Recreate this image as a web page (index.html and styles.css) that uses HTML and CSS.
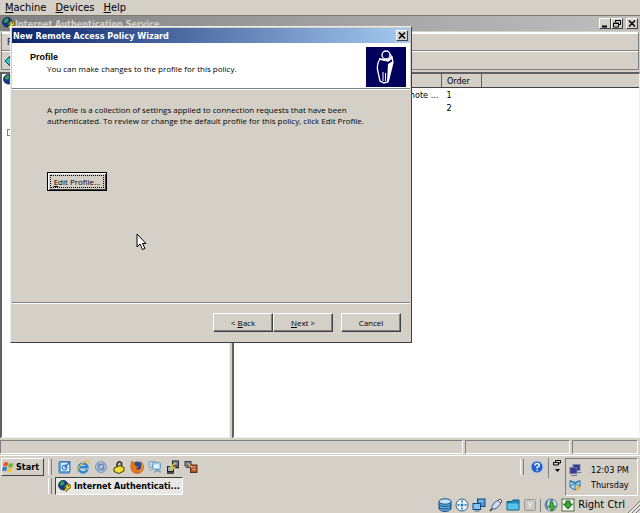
FILE: index.html
```
<!DOCTYPE html>
<html lang="en">
<head>
    <meta charset="UTF-8">
    <meta name="viewport" content="width=device-width, initial-scale=1.0">
    <title>Internet Authentication Service</title>
    <link rel="stylesheet" href="styles.css">
</head>
<body>
    <!-- Shared icons -->
    <svg class="symbols" aria-hidden="true">
        <symbol id="globe-key" viewBox="0 0 16 16">
            <circle cx="6.5" cy="6.5" r="5.8" fill="#123a8c" stroke="#0a1c48"/>
            <path d="M3 3l3-2 2 2-1 3-3 1-2-1zM8 7l3-2 1 2-2 4-2-1z" fill="#2f9e57"/>
            <path d="M8.5 13.5L12 9" stroke="#4a4200" stroke-width="4"/>
            <circle cx="12.5" cy="8" r="3" fill="#f0dc3c" stroke="#4a4200"/>
            <path d="M8.5 13.5L12 9" stroke="#f0dc3c" stroke-width="2"/>
            <circle cx="13" cy="7.500" r="1" fill="#4a4200"/>
        </symbol>
    </svg>

    <nav class="vm-menu">
        <a href="#"><u>M</u>achine</a>
        <a href="#"><u>D</u>evices</a>
        <a href="#"><u>H</u>elp</a>
    </nav>

    <header class="console-title">
        <svg class="icon"><use href="#globe-key"/></svg>
        <span class="title-text">Internet Authentication Service</span>
        <div class="window-buttons">
            <button class="caption" aria-label="Minimize"><svg viewBox="0 0 10 9"><path d="M2 7.500h5" stroke="#000" stroke-width="2"/></svg></button>
            <button class="caption" aria-label="Restore"><svg viewBox="0 0 10 9"><path d="M3.500 3V1.500h5v4H7M3.500 1.500h5M1.500 4h5v4h-5zM1.500 4.500h5" fill="none" stroke="#000"/></svg></button>
            <button class="caption close" aria-label="Close"><svg viewBox="0 0 10 9"><path d="M2 1.500l6 6M8 1.500l-6 6" stroke="#000" stroke-width="1.500"/></svg></button>
        </div>
    </header>

    <div class="bars">
        <div class="bar menu-bar"><a href="#">F</a></div>
        <div class="bar tool-bar">
            <button class="tool" aria-label="Back"><svg viewBox="0 0 12 12"><path d="M1 6l5-5v3h5v4H6v3z" fill="#2cc4c4" stroke="#0b4c58"/></svg></button>
        </div>
    </div>

    <main class="panes">
        <section class="tree-pane">
            <svg class="icon"><use href="#globe-key"/></svg>
            <span class="expander"></span>
        </section>
        <section class="list-pane">
            <table>
                <thead>
                    <tr><th class="name"></th><th class="order">Order</th><th></th></tr>
                </thead>
                <tbody>
                    <tr><td class="name">Remote ...</td><td>1</td><td></td></tr>
                    <tr><td class="name"></td><td>2</td><td></td></tr>
                </tbody>
            </table>
        </section>
    </main>

    <div class="status-bar">
        <span class="wide"></span>
        <span class="mid"></span>
        <span class="small"></span>
    </div>

    <footer class="taskbar">
        <div class="start-area">
            <button class="start">
                <svg viewBox="0 0 13 12">
                    <path d="M2 1.500q2-1.200 4.200 0L5.300 5.500q-2-1-4.200 0z" fill="#e8562a"/>
                    <path d="M7 2q2 1 4.500 0l-1 4q-2.200 1-4.400 0z" fill="#6cb33c"/>
                    <path d="M.9 6.300q2-1 4.200 0l-.9 4q-2-1-4.200 0z" fill="#3c78d8"/>
                    <path d="M5.900 6.800q2 1 4.400 0l-1 4q-2.200 1-4.300 0z" fill="#f4c430"/>
                </svg>
                Start
            </button>
        </div>
        <div class="bands">
            <div class="band quick-launch">
                <button aria-label="Show desktop"><svg viewBox="0 0 14 14"><rect x="1" y="1.500" width="11" height="11.500" rx="1" fill="#5ea2da" stroke="#3f7cb8"/><path d="M3 3h8v8H3z" fill="#e4f2fc"/><circle cx="6.500" cy="7.500" r="2.300" fill="none" stroke="#3a80c0" stroke-width="1.300"/><path d="M6.500 7.500l6-6" stroke="#2d70b4" stroke-width="1.500"/></svg></button>
                <button aria-label="Internet Explorer"><svg viewBox="0 0 14 14"><path d="M11.300 9.500A4.500 4.500 0 1 1 11.500 7.200H4" fill="none" stroke="#2688d8" stroke-width="2.400"/><path d="M2 12.500C-1 10 8-.5 12.500 1c1 .5.500 2 0 2.500" fill="none" stroke="#e8b838" stroke-width="1.200"/></svg></button>
                <button aria-label="Media"><svg viewBox="0 0 14 14"><circle cx="7" cy="7" r="5.500" fill="#9ab2d0" stroke="#8298b8"/><circle cx="7" cy="7" r="3" fill="#86a4cc" stroke="#6684ac"/><path d="M5.500 8.500l3-3" stroke="#e8f0f8"/><path d="M7 2v1.500M7 10.500V12M2 7h1.500M10.500 7H12" stroke="#d8e4f0"/></svg></button>
                <button aria-label="Lock"><svg viewBox="0 0 14 14"><path d="M5 7V4q2-4 4.500-1v4" fill="none" stroke="#222" stroke-width="1.500"/><path d="M2 8l6-2.500 4 2v3.500l-5 2.500L2 11.500z" fill="#ecd820" stroke="#4a4200"/><path d="M4 9l3 1.200v2" stroke="#fff59a" fill="none"/></svg></button>
                <button aria-label="Firefox"><svg viewBox="0 0 14 14"><circle cx="7.200" cy="6.500" r="5" fill="#284f94"/><path d="M1 4q0-2 1-3 1 2 3 2-1 2 1 3l2 .5Q5 9 8 10q3 0 3.500-3.500Q12 3 10.500 1.500 14 4 13.500 8 12.500 13 7 13.500 1.500 13 .8 7.500z" fill="#e8761c" stroke="#ad4815" stroke-width=".6"/><path d="M12 4.500q1 5-3 7" fill="none" stroke="#f9bd3b"/></svg></button>
                <button aria-label="Remote desktop"><svg viewBox="0 0 14 14"><rect x="1" y="1.500" width="6" height="6" fill="#b9d4ec" stroke="#8aa4bc"/><rect x="4.500" y="2.500" width="8" height="7" rx="1" fill="#a4d0f4" stroke="#6d9fc3"/><path d="M6 4.500h5v3.500H6z" fill="#e6f4fe"/><path d="M6 12.500l3-2 4 1.500" fill="none" stroke="#8296ac" stroke-width="1.500"/><path d="M1 10h3" stroke="#9aacbc"/></svg></button>
                <button aria-label="Terminal"><svg viewBox="0 0 14 14"><rect x="6.500" y="1" width="6" height="5" fill="#7484b4" stroke="#222"/><path d="M7 7.500h6M1 13h7" stroke="#222" stroke-width="1.300"/><rect x="1.500" y="6.500" width="6" height="5" fill="#a7b3cc" stroke="#222"/><path d="M9.500 3L5 6.500l3.500 1-4 3" fill="none" stroke="#e7ce25" stroke-width="1.300"/></svg></button>
                <button aria-label="Transfer"><svg viewBox="0 0 14 14"><rect x="1" y="1.500" width="6" height="4.500" fill="#7888a8" stroke="#3a3a45"/><path d="M2 7.500h4" stroke="#555" stroke-width="1.300"/><rect x="6.500" y="5" width="6.500" height="7.500" fill="#b0532f" stroke="#602e1e"/><path d="M8 7h4M8 9.500h4" stroke="#e4a274"/><path d="M4 3.500l4 4" stroke="#dfbd4b" stroke-width="1.300"/></svg></button>
            </div>
            <div class="band tasks">
                <button class="task"><svg class="icon"><use href="#globe-key"/></svg>Internet Authenticati...</button>
            </div>
        </div>
        <div class="language">
            <button aria-label="Help"><svg viewBox="0 0 14 14"><circle cx="7" cy="7" r="6" fill="#2563c8" stroke="#a9c5ef"/><path d="M5 5.500q0-2 2.200-2T9.300 5.300Q9.300 6.500 7.200 7.300V8.500M7.200 9.700v1.400" fill="none" stroke="#fff" stroke-width="1.500"/></svg></button>
        </div>
        <button class="chevrons" aria-label="Restore language bar"><svg viewBox="0 0 8 14"><path d="M2.500 3V1.500h5v2.500H6M.5 3.500h5v2.500h-5z" fill="none" stroke="#000"/><path d="M2 10h5l-2.500 3z"/></svg></button>
        <div class="tray">
            <div class="tray-row">
                <svg viewBox="0 0 12 12"><rect x="4" y=".5" width="7" height="6" fill="#2c368b" stroke="#7c85ad"/><rect x="1" y="3.500" width="7" height="6" fill="#353da1" stroke="#6c7396"/><path d="M2 11.500h6M9 8.500h3" stroke="#6c7080"/></svg>
                <span>12:03 PM</span>
            </div>
            <div class="tray-row">
                <svg viewBox="0 0 12 12"><path d="M1 1.500l5 2 5-2v6L6 11 1 8z" fill="#b6d8ec" stroke="#286ea4"/><path d="M1 2l10 5M11 2L1 7M6 3.500v7" stroke="#307fae"/><path d="M9 6l1 2 2 .3-1.500 1.400.5 2L9 10.600 7 12l.5-2.300L6 8.300 8 8z" fill="#f4b53c"/></svg>
                <span>Thursday</span>
            </div>
        </div>
    </footer>

    <div class="vm-status">
        <svg viewBox="0 0 14 14"><g fill="#65b4e8" stroke="#174775"><path d="M1 9v2q2 2.500 6 2.500t6-2.500V9z"/><path d="M1 6v3q2 2 6 2t6-2V6z"/><path d="M1 3.500v3Q3 8.500 7 8.500t6-2v-3z"/><ellipse cx="7" cy="3.500" rx="6" ry="2.700" fill="#bfe4fa"/></g></svg>
        <svg viewBox="0 0 14 14"><circle cx="7" cy="7" r="6" fill="#eef5fb" stroke="#36648d"/><circle cx="7" cy="7" r="1.500" fill="#2676b4"/><path d="M7 2.500v2M7 9.500v2M2.500 7h2M9.500 7h2" stroke="#3b8cc9" stroke-width="2"/></svg>
        <svg viewBox="0 0 14 14"><rect x="5.500" y="1" width="7.500" height="7.500" fill="#4b98dd" stroke="#1b4677"/><path d="M7 3h4.500" stroke="#a8d4f8"/><rect x="1" y="5.500" width="7.500" height="6" fill="#82c4f1" stroke="#1b4677"/><path d="M2.500 13h5" stroke="#496885"/></svg>
        <svg viewBox="0 0 14 14"><path d="M1 13l3-3" stroke="#333" stroke-width="1.500"/><path d="M3 11q-1-3 2-6l4-3 3 3-3 4q-3 3-6 2z" fill="#d4dcf4" stroke="#4b5a93"/><path d="M9 2.500l2-1.500 2 2-1.500 2z" fill="#fff" stroke="#444"/></svg>
        <svg viewBox="0 0 14 14"><path d="M1 3.500h5l1-1.500h6v10H1z" fill="#238eb9" stroke="#10587c"/><path d="M1.500 5.500h11v6h-11z" fill="#58c4ea"/></svg>
        <svg viewBox="0 0 14 14"><rect x="1.500" y="1.500" width="11" height="11" rx="1" fill="#c9c7c1" stroke="#9a9892"/><path d="M5 4l2 5 2-5" fill="none" stroke="#e9e7e1" stroke-width="1.300"/></svg>
        <span class="divider"></span>
        <svg viewBox="0 0 14 14"><circle cx="7" cy="7" r="6" fill="#dce5ed" stroke="#55708c"/><path d="M4 2q-3 4 0 9M6 3l3-1" stroke="#3f79a9" stroke-width="1.500" fill="none"/><path d="M6 4h3v4h2.500L8 13 4.500 8H6z" fill="#42b541" stroke="#1c701d"/></svg>
        <svg viewBox="0 0 14 14"><rect x="1" y="1" width="12" height="12" fill="#eef5e8" stroke="#4d6c49"/><path d="M5 3h4v3h2.500L7 11 2.500 6H5z" fill="#39a936" stroke="#17661b"/></svg>
        <span class="host-key">Right Ctrl</span>
        <svg class="grip" viewBox="0 0 12 12"><path d="M0 12L12 0M4 12l8-8M8 12l4-4" stroke="#77746c"/><path d="M1.500 12L12 1.500M5.500 12L12 5.500M9.500 12L12 9.500" stroke="#fff"/></svg>
    </div>

    <div class="wizard" role="dialog" aria-labelledby="wizardTitle">
        <div class="wizard-title">
            <span class="title-text" id="wizardTitle">New Remote Access Policy Wizard</span>
            <button class="caption" aria-label="Close"><svg viewBox="0 0 10 9"><path d="M2 1.500l6 6M8 1.500l-6 6" stroke="#000" stroke-width="1.500"/></svg></button>
        </div>
        <div class="wizard-header">
            <div>
                <h1>Profile</h1>
                <p>You can make changes to the profile for this policy.</p>
            </div>
            <svg class="banner" viewBox="0 0 40 40">
                <rect width="40" height="40" fill="#00005c"/>
                <path d="M14 12q-4 6-2 13l2 9 4 2 4-1 2-13 3-6-1-6-5 3z" fill="#00005c" stroke="#fff" stroke-width="1.300"/>
                <path d="M27 14l-5 3-1 18 2-1 3-12 1-4z" fill="#fff"/>
                <path d="M17 25v9M19.500 26v8" stroke="#fff"/>
                <path d="M13 12l9 2 4-3-2-4" fill="none" stroke="#fff" stroke-width="1.500"/>
                <circle cx="20" cy="8" r="4" fill="#00005c" stroke="#fff" stroke-width="1.300"/>
            </svg>
        </div>
        <div class="wizard-body">
            <p>A profile is a collection of settings applied to connection requests that have been<br>authenticated. To review or change the default profile for this policy, click Edit Profile.</p>
            <button class="push default"><u>E</u>dit Profile...</button>
        </div>
        <div class="wizard-footer">
            <button class="push">&lt; <u>B</u>ack</button>
            <button class="push"><u>N</u>ext &gt;</button>
            <button class="push cancel">Cancel</button>
        </div>
    </div>

    <svg class="pointer" viewBox="0 0 11 18"><path d="M1 1v13l3-3 2.500 5.500L9 15.500 6.500 10.500H10z" fill="#fff" stroke="#000"/></svg>
</body>
</html>
```
FILE: styles.css
```
* {
    box-sizing: border-box;
}

body {
    margin: 0;
    height: 100vh;
    display: flex;
    flex-direction: column;
    overflow: hidden;
    background-color: #d4d0c8;
    color: #000;
    font-family: "DejaVu Sans Condensed", "DejaVu Sans", sans-serif;
    font-size: 9px;
    line-height: 12px;
}

a {
    color: inherit;
    text-decoration: none;
}

button {
    padding: 0;
    border: none;
    background: none;
    color: inherit;
    font: inherit;
}

svg {
    display: block;
    flex: none;
}

.symbols {
    position: absolute;
    width: 0;
    height: 0;
}

.icon {
    width: 13px;
    height: 13px;
}

/* Virtual machine menu */
.vm-menu {
    display: flex;
    gap: 9px;
    padding: 1px 5px 0;
    height: 16px;
    border-bottom: 1px solid #77776c;
    font-size: 11px;
    line-height: 14px;
}

/* Console window */
.console-title {
    display: flex;
    align-items: center;
    height: 15px;
    padding: 0 2px;
    background: linear-gradient(to right, #808080, #c0c0c0);
    color: #d4d0c8;
}

.title-text {
    flex: 1;
    font-weight: bold;
}

.window-buttons {
    display: flex;
}

.caption {
    width: 12px;
    height: 11px;
    border: 1px solid;
    border-color: #fff #404040 #404040 #fff;
    background-color: #d4d0c8;
}

.caption svg {
    width: 10px;
    height: 9px;
}

.caption.close {
    margin-left: 3px;
}

.bars {
    margin: 1px 1px 2px;
    border: 1px solid #808080;
    border-top-color: #fff;
}

.bar {
    display: flex;
    align-items: center;
    height: 18px;
    padding-left: 5px;
    border-top: 1px solid #fff;
}

.menu-bar {
    border-bottom: 1px solid #808080;
}

.tool-bar {
    padding-left: 2px;
}

.tool svg {
    width: 12px;
    height: 12px;
}

.panes {
    flex: 1;
    display: flex;
    gap: 2px;
    min-height: 0;
}

.tree-pane,
.list-pane {
    border: 1px solid #f4f2ee;
    border-top: 2px solid #606060;
    border-left: 2px solid #606060;
    background-color: #fff;
}

.tree-pane {
    width: 36%;
    padding-left: 1px;
}

.expander {
    display: block;
    width: 7px;
    height: 7px;
    margin: 42px 0 0 4px;
    border: 1px solid #808080;
}

.list-pane {
    flex: 1;
}

table {
    width: 100%;
    border-collapse: collapse;
    table-layout: fixed;
}

th,
td {
    height: 13px;
    padding: 1px 0 0 5px;
    text-align: left;
    font-weight: normal;
}

th {
    background-color: #d4d0c8;
    border-right: 1px solid #606060;
    border-bottom: 1px solid #404040;
}

th.name {
    width: 207px;
}

th.order {
    width: 40px;
}

th:last-child {
    border-right: none;
}

td.name {
    padding-right: 3px;
    text-align: right;
}

.status-bar {
    display: flex;
    gap: 2px;
    padding: 2px 2px 1px 0;
    border-bottom: 1px solid #fff;
}

.status-bar span {
    height: 14px;
    border: 1px solid;
    border-color: #808080 #fff #fff #808080;
}

.status-bar .wide {
    flex: 1;
}

.status-bar .mid {
    width: 105px;
}

.status-bar .small {
    width: 66px;
}

/* Taskbar */
.taskbar {
    display: flex;
    padding: 2px 2px 1px 1px;
}

.start-area {
    padding-right: 4px;
}

.start {
    display: flex;
    align-items: center;
    gap: 1px;
    width: 43px;
    height: 18px;
    border: 1px solid;
    border-color: #fff #404040 #404040 #fff;
    font-weight: bold;
}

.start svg {
    width: 13px;
    height: 12px;
}

.bands {
    flex: 1;
}

.band {
    display: flex;
    align-items: center;
    height: 18px;
    margin-bottom: 1px;
}

.band::before,
.language::before {
    content: "";
    width: 2px;
    height: 16px;
    border-left: 1px solid #fff;
    border-right: 1px solid #808080;
}

.quick-launch {
    gap: 4px;
}

.quick-launch::before {
    margin-right: 2px;
}

.quick-launch svg,
.language svg {
    width: 14px;
    height: 14px;
}

.tasks {
    gap: 3px;
}

.task {
    display: flex;
    align-items: center;
    gap: 3px;
    width: 128px;
    height: 18px;
    padding-left: 2px;
    border: 1px solid;
    border-color: #404040 #fff #fff #404040;
    background-color: #e9e7e3;
    font-weight: bold;
}

.language {
    display: flex;
    align-items: center;
    gap: 6px;
    height: 18px;
    padding-right: 4px;
}

.chevrons {
    display: flex;
    width: 17px;
    height: 20px;
    padding: 1px 0 0 4px;
    border-left: 1px solid #808080;
}

.chevrons svg {
    width: 8px;
    height: 14px;
}

.tray {
    width: 73px;
    padding: 3px;
    border: 1px solid;
    border-color: #808080 #fff #fff #808080;
}

.tray-row {
    display: flex;
    align-items: center;
    gap: 10px;
    height: 15px;
}

.tray-row svg {
    width: 12px;
    height: 12px;
}

/* Virtual machine status icons */
.vm-status {
    display: flex;
    align-items: center;
    justify-content: flex-end;
    gap: 3px;
    height: 16px;
    font-size: 11px;
}

.vm-status svg {
    width: 14px;
    height: 14px;
}

.vm-status .divider {
    width: 1px;
    height: 13px;
    background-color: #808080;
}

.vm-status .grip {
    align-self: flex-end;
    width: 12px;
    height: 12px;
}

/* Wizard dialog */
.wizard {
    position: absolute;
    top: 26px;
    left: 10px;
    display: flex;
    flex-direction: column;
    width: 402px;
    height: 317px;
    padding: 1px;
    border: 1px solid;
    border-color: #f0eeea #404040 #404040 #f0eeea;
    background-color: #d4d0c8;
    font-family: "Open Sans", "Liberation Sans", sans-serif;
    font-size: 8px;
}

.wizard-title {
    display: flex;
    align-items: center;
    height: 15px;
    padding: 0 2px 0 1px;
    background: linear-gradient(to right, #0a246a, #a6caf0);
    color: #fff;
    font-family: "DejaVu Sans Condensed", "DejaVu Sans", sans-serif;
    font-size: 9px;
}

.wizard-header {
    display: flex;
    justify-content: space-between;
    height: 46px;
    padding: 4px 4px 0 18px;
    border-bottom: 1px solid #808080;
    box-shadow: 0 1px #fff;
    background-color: #fff;
}

h1 {
    margin: 4px 0 0;
    font-family: "Liberation Sans", Arial, sans-serif;
    font-size: 9px;
    line-height: 12px;
}

p {
    margin: 0;
}

.wizard-header p {
    padding-left: 17px;
}

.banner {
    width: 40px;
    height: 40px;
}

.wizard-body {
    flex: 1;
    padding: 15px 35px;
    border-bottom: 1px solid #808080;
    box-shadow: 0 1px #fff;
}

.wizard-body p {
    margin-bottom: 46px;
    line-height: 11px;
    white-space: nowrap;
}

.push {
    width: 60px;
    height: 19px;
    border: 1px solid;
    border-color: #fff #404040 #404040 #fff;
    box-shadow: inset -1px -1px #808080;
    background-color: #d4d0c8;
}

.push.default {
    border-color: #000;
    box-shadow: inset 1px 1px #fff, inset -1px -1px #404040;
    outline: 1px dotted #000;
    outline-offset: -4px;
}

.wizard-footer {
    display: flex;
    justify-content: flex-end;
    height: 38px;
    padding: 10px 9px 0;
}

.push.cancel {
    margin-left: 8px;
}

.pointer {
    position: absolute;
    top: 233px;
    left: 136px;
    width: 11px;
    height: 18px;
}
```
